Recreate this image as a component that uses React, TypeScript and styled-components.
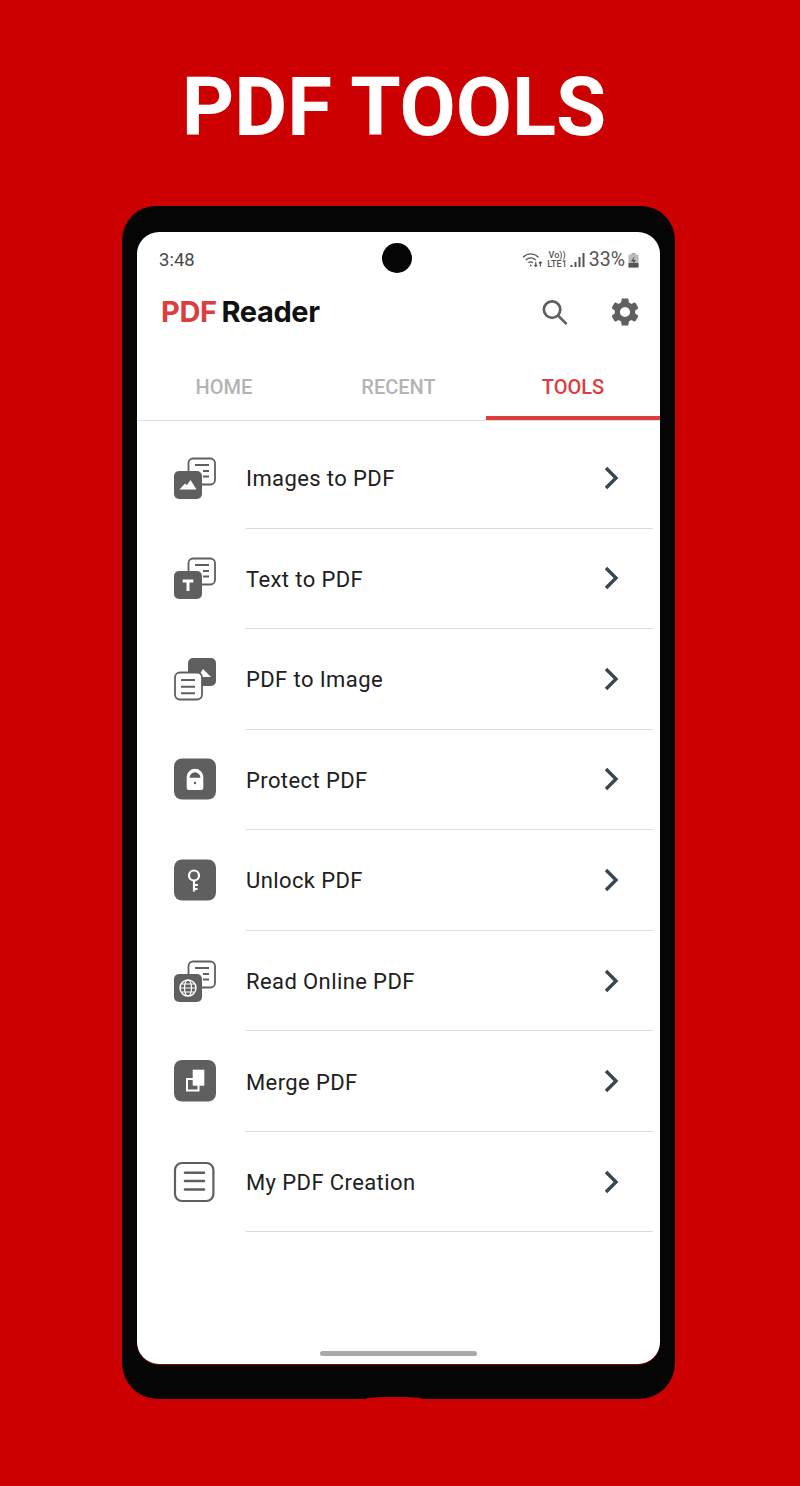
import React from "react";
import styled, { createGlobalStyle } from "styled-components";

const Global = createGlobalStyle`
  html, body { margin: 0; padding: 0; background: #cc0000; }
  * { box-sizing: border-box; }
  body { font-family: Roboto, "Liberation Sans", sans-serif; }
`;
const Page = styled.div`
  width: 800px; height: 1486px; background: #cc0000;
  display: flex; flex-direction: column; align-items: center; overflow: hidden;
`;
const Title = styled.h1`
  margin: 0; height: 206px; padding-top: 10px; display: flex; align-items: center;
  font: 700 81.5px/1 Roboto, sans-serif; color: #fff; letter-spacing: 0;
  position: relative; left: -6px;
`;
const Phone = styled.div`
  position: relative; width: 553px; height: 1193px; align-self: flex-start; margin-left: 122px;
  background: #050505; border-radius: 34px 34px 36px 36px;
  padding: 26px 15px 35px 15px;
`;
const Notch = styled.div`
  position: absolute; left: 244px; bottom: -1px; width: 56px; height: 3px;
  background: #cc0000; border-radius: 50% 50% 0 0;
`;
const Screen = styled.div`
  position: relative; width: 523px; height: 1132px; background: #fff;
  border-radius: 22px; display: flex; flex-direction: column; overflow: hidden;
  box-shadow: 0 1px 0 #7a0505;
`;
const Camera = styled.div`
  position: absolute; left: 245px; top: 11px; width: 30px; height: 30px;
  background: #050505; border-radius: 50%;
`;
const Status = styled.div`
  height: 56px; padding: 0 21px 0 22px; display: flex; align-items: center; justify-content: space-between;
  font: 400 18.5px/1 Roboto, sans-serif; color: #4a4a4a;
`;
const StatusRight = styled.div`
  display: flex; align-items: center; gap: 3px; color: #555; font-size: 19.5px;
`;
const Net = styled.span`
  display: flex; flex-direction: column; align-items: center; font: 500 9px/9px Roboto, sans-serif; color: #555;
`;
const Toolbar = styled.div`
  height: 48px; padding: 0 18px 0 24px; display: flex; align-items: center; justify-content: space-between;
`;
const Logo = styled.div`
  font: 700 29px/1 Inter, Roboto, sans-serif; letter-spacing: -0.4px; color: #111; display: flex; gap: 5px;
  position: relative; top: -1px;
`;
const LogoRed = styled.span` color: #dc3d3d; `;
const Actions = styled.div` display: flex; align-items: center; gap: 39px; `;
const Tabs = styled.div`
  height: 53px; margin-top: 32px; display: flex; border-bottom: 1px solid #dfdfdf; position: relative;
`;
const Tab = styled.div<{ $active?: boolean; $w: number }>`
  width: ${p => p.$w}px; display: flex; align-items: center; justify-content: center;
  font: 500 20px/1 Roboto, sans-serif; color: ${p => (p.$active ? "#dc3d3d" : "#b4b4b4")};
  position: relative; top: -7px;
`;
const TabLine = styled.div`
  position: absolute; right: 0; bottom: 0; width: 174px; height: 4px; background: #dc3d3d;
`;
const List = styled.div` padding-top: 7px; display: flex; flex-direction: column; `;
const Row = styled.div`
  height: 100.55px; display: flex; align-items: center; position: relative; padding-left: 35px;
`;
const IconBox = styled.div`
  width: 46px; height: 46px; display: flex; align-items: center; justify-content: center;
  margin-right: 28px; margin-top: 1px;
`;
const Label = styled.span`
  font: 400 22px/1 Roboto, sans-serif; color: #202020; flex: 1; letter-spacing: 0.4px;
  position: relative; top: 1px;
`;
const Chevron = styled.div` margin-right: 39px; display: flex; margin-top: -1px; `;
const Divider = styled.div`
  position: absolute; left: 109px; right: 7px; bottom: 0; height: 1px; background: #dcdcdc;
`;
const HomeBar = styled.div`
  position: absolute; left: 183px; bottom: 8px; width: 157px; height: 5px; border-radius: 3px; background: #aaa;
`;

const G = "#5f5f5f";
const Doc = () => (
  <g>
    <rect x="16.500" y="2.500" width="26.500" height="26" rx="4.500" fill="#fff" stroke={G} strokeWidth="1.800" />
    <path d="M23 9h14M31 15h6M31 20.500h6" stroke={G} strokeWidth="1.800" />
  </g>
);
const Back = ({ children }: { children?: React.ReactNode }) => (
  <g>
    <rect x="2" y="15" width="28" height="28" rx="5" fill={G} />
    {children}
  </g>
);
const Svg = ({ children }: { children: React.ReactNode }) => (
  <svg width="46" height="46" viewBox="0 0 46 46" fill="none">{children}</svg>
);
const icons: React.ReactNode[] = [
  <Svg><Doc /><Back><path d="M7.500 33.500L13 27.500l2 1.500 3.500-5 6 9.500z" fill="#fff" /></Back></Svg>,
  <Svg><Doc /><Back><path d="M10.700 25h10.600M16 25v10" stroke="#fff" strokeWidth="3" /></Back></Svg>,
  <Svg>
    <rect x="16" y="1" width="28" height="28" rx="5" fill={G} />
    <path d="M31 12l8 8H26z" fill="#fff" />
    <rect x="3" y="15.500" width="27" height="27" rx="5" fill="#fff" stroke={G} strokeWidth="1.800" />
    <path d="M9 23h14M9 29.700h14M9 36.300h14" stroke={G} strokeWidth="2" />
  </Svg>,
  <Svg>
    <rect x="2" y="1.500" width="42" height="41" rx="8" fill={G} />
    <path d="M14.700 31V20a8.300 8.300 0 0116.600 0v11a2 2 0 01-2 2H16.700a2 2 0 01-2-2z" fill="#fff" />
    <path d="M17.500 20.800a5.500 5.500 0 0111 0z" fill={G} />
    <circle cx="23" cy="26" r="1.200" fill={G} />
  </Svg>,
  <Svg>
    <rect x="2" y="1.500" width="42" height="41" rx="8" fill={G} />
    <circle cx="22" cy="17.500" r="5" stroke="#fff" strokeWidth="2.200" />
    <path d="M22 22v11.500M22 27h4M22 31h3.500" stroke="#fff" strokeWidth="2.200" />
  </Svg>,
  <Svg>
    <Doc />
    <Back>
      <circle cx="16" cy="29" r="8" stroke="#fff" strokeWidth="1.400" />
      <ellipse cx="16" cy="29" rx="3.500" ry="8" stroke="#fff" strokeWidth="1.200" />
      <path d="M8 29h16M9.500 25h13M9.500 33h13" stroke="#fff" strokeWidth="1.200" />
    </Back>
  </Svg>,
  <Svg>
    <rect x="2" y="1" width="42" height="41.500" rx="8" fill={G} />
    <rect x="15" y="20" width="11.500" height="11.500" fill={G} stroke="#fff" strokeWidth="2" />
    <rect x="20.700" y="10.700" width="11.600" height="16" fill="#fff" />
  </Svg>,
  <Svg>
    <rect x="3" y="3" width="38.400" height="38" rx="7" stroke={G} strokeWidth="2.200" />
    <path d="M13 12.800h19M13 21h19M13 29.500h19" stroke={G} strokeWidth="2.600" strokeLinecap="round" />
  </Svg>,
];
const items = ["Images to PDF", "Text to PDF", "PDF to Image", "Protect PDF", "Unlock PDF", "Read Online PDF", "Merge PDF", "My PDF Creation"];

export default function App() {
  return (
    <Page>
      <Global />
      <Title>PDF TOOLS</Title>
      <Phone>
        <Screen>
          <Camera />
          <Status>
            <span>3:48</span>
            <StatusRight>
              <svg width="22" height="18" viewBox="0 0 24 18" fill="none" stroke="#555" strokeWidth="1.300">
                <path d="M1 6c5-5 12-5 17 0M4 9c3.500-3 7.500-3 11 0M7 12c2-1.600 3-1.600 5 0" />
                <circle cx="9.500" cy="15" r="1" fill="#555" stroke="none" />
                <path d="M15 11v5M13.500 14.500l1.500 1.500 1.500-1.500M20 16v-5M18.500 12.500l1.500-1.500 1.500 1.500" />
              </svg>
              <Net><span>Vo))</span><span>LTE1</span></Net>
              <svg width="16" height="16" viewBox="0 0 15 16" fill="#555">
                <rect x="0" y="13" width="2" height="2" /><rect x="4" y="10" width="2" height="5" /><rect x="8" y="5" width="2" height="10" /><rect x="12" y="1" width="2" height="14" />
              </svg>
              <span>33%</span>
              <svg width="11" height="15" viewBox="0 0 11 15">
                <rect x="3.500" y="0" width="4" height="2" fill="#aaa" />
                <rect x="0.500" y="1.500" width="10" height="13" rx="1" fill="#bbb" />
                <rect x="0.500" y="10" width="10" height="4.500" fill="#555" />
                <path d="M6.500 3L3 8.500h2.500L4.500 12 8 7H5.500z" fill="#555" />
              </svg>
            </StatusRight>
          </Status>
          <Toolbar>
            <Logo><LogoRed>PDF</LogoRed><span>Reader</span></Logo>
            <Actions>
              <svg width="29" height="29" viewBox="0 0 30 30" fill="none" stroke="#5f5f5f" strokeWidth="2.800">
                <circle cx="12.500" cy="12" r="8.500" />
                <path d="M18.500 18l9 9" />
              </svg>
              <svg width="34" height="34" viewBox="0 0 24 24" fill="#5f5f5f">
                <path d="M19.140 12.940c.04-.3.060-.61.060-.94 0-.32-.020-.64-.070-.94l2.030-1.580a.49.49 0 0 0 .12-.61l-1.920-3.320a.49.49 0 0 0-.59-.22l-2.390.96c-.5-.38-1.030-.7-1.620-.94l-.36-2.540a.48.480 0 0 0-.48-.41h-3.840a.47.470 0 0 0-.47.41l-.36 2.540c-.59.24-1.130.57-1.620.94l-2.390-.96a.48.480 0 0 0-.59.22L2.740 8.870a.47.470 0 0 0 .12.61l2.030 1.580c-.05.3-.09.63-.09.94s.020.64.070.94l-2.030 1.580a.49.490 0 0 0-.12.61l1.920 3.320c.12.22.37.29.59.22l2.390-.96c.5.38 1.030.7 1.620.94l.36 2.540c.05.24.24.41.48.41h3.840c.24 0 .44-.17.47-.41l.36-2.540c.59-.24 1.130-.56 1.620-.94l2.390.96c.22.08.47 0 .59-.22l1.920-3.320a.47.470 0 0 0-.12-.61l-2.010-1.580zM12 15.600A3.610 3.610 0 0 1 8.400 12 3.610 3.610 0 0 1 12 8.400a3.610 3.610 0 0 1 3.600 3.600 3.610 3.610 0 0 1-3.600 3.600z" />
              </svg>
            </Actions>
          </Toolbar>
          <Tabs>
            <Tab $w={174}>HOME</Tab>
            <Tab $w={175}>RECENT</Tab>
            <Tab $w={174} $active>TOOLS</Tab>
            <TabLine />
          </Tabs>
          <List>
            {items.map((t, i) => (
              <Row key={t}>
                <IconBox>{icons[i]}</IconBox>
                <Label>{t}</Label>
                <Chevron>
                  <svg width="18" height="26" viewBox="0 0 18 26" fill="none" stroke="#37474f" strokeWidth="3.400">
                    <path d="M3 3l10 10L3 23" />
                  </svg>
                </Chevron>
                <Divider />
              </Row>
            ))}
          </List>
          <HomeBar />
        </Screen>
        <Notch />
      </Phone>
    </Page>
  );
}
